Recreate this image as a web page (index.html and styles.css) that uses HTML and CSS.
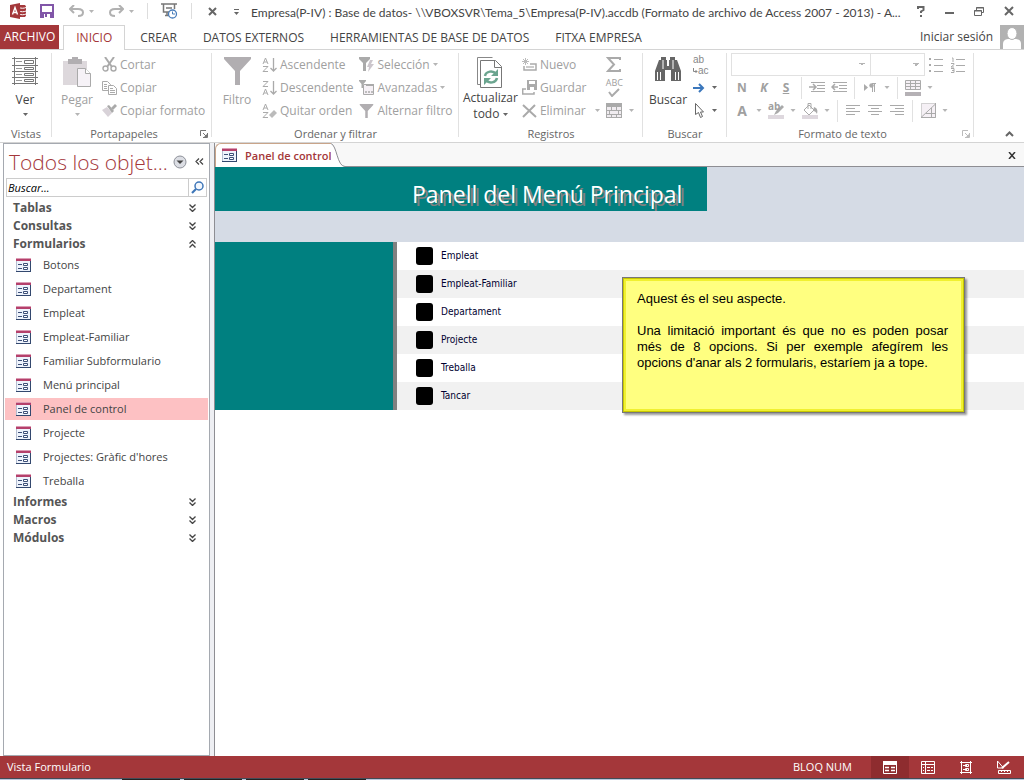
FILE: index.html
```html
<!DOCTYPE html>
<html lang="es">
<head>
    <meta charset="UTF-8">
    <meta name="viewport" content="width=device-width, initial-scale=1.0">
    <title>Empresa(P-IV) : Base de datos</title>
    <link rel="stylesheet" href="styles.css">
</head>
<body>

    <svg class="defs" aria-hidden="true">
        <symbol id="caret" viewBox="0 0 5 3"><path d="M0 0h5L2.500 3z" fill="currentColor"/></symbol>
        <symbol id="form" viewBox="0 0 16 15">
            <path d="M.5.5h14v13H.5z" fill="#eef3fc" stroke="#b4bdd0"/>
            <path d="M0 0h15v3H0z" fill="#b5406b"/><path d="M0 0h15v1H0z" fill="#dc9db5"/>
            <path d="M14.500 3v11M0 13.500h15" stroke="#33486e"/>
            <path d="M2 6.500h4M2 10.500h4" stroke="#3d5078"/>
            <path d="M7.500 5.500h4v2h-4zM7.500 9.500h4v2h-4z" fill="#fff" stroke="#3d5078"/>
        </symbol>
        <symbol id="down" viewBox="0 0 7 8"><path d="M.5.5l3 3 3-3M.5 4.500l3 3 3-3" fill="none" stroke="#444" stroke-width="1.300"/></symbol>
        <symbol id="up" viewBox="0 0 7 8"><path d="M.5 3.500l3-3 3 3M.5 7.500l3-3 3 3" fill="none" stroke="#444" stroke-width="1.300"/></symbol>
        <symbol id="launch" viewBox="0 0 8 8"><path d="M.5 6V.5H6M3 3l3.500 3.500M7.500 3v4.500H3" fill="none" stroke="currentColor"/><path d="M4 7h3V4z" fill="currentColor"/></symbol>
        <symbol id="funnel" viewBox="0 0 27 28"><path d="M0 0h27v2L16 14v14h-5V14L0 2z" fill="currentColor"/></symbol>
    </svg>

    <header class="titlebar">
        <svg class="app-logo" width="16" height="16" viewBox="0 0 16 16"><path d="M9 2h5c1 0 2 .7 2 1.500v9c0 .8-1 1.500-2 1.500H9z" fill="#a4373a"/><path d="M9 4.500c2 1 5 1 7 0M9 8c2 1 5 1 7 0M9 11c2 1 5 1 7 0" stroke="#fff" fill="none"/><path d="M0 2l10-2v16L0 14z" fill="#a4373a"/><path d="M2.500 11.500L5 4.500l2.500 7M3.500 9.500h3" fill="none" stroke="#fff" stroke-width="1.400"/></svg>
        <button class="quick save" aria-label="Guardar"><svg width="14" height="14" viewBox="0 0 14 14"><path d="M1 1h12v12H1z" fill="#fff" stroke="#8156a8" stroke-width="2"/><path d="M1 8h12v5H1z" fill="#8156a8"/><path d="M4 10h6v4H4z" fill="#fff"/><path d="M5 10h2v3H5z" fill="#8156a8"/></svg></button>
        <button class="quick undo" aria-label="Deshacer"><svg width="15" height="12" viewBox="0 0 15 12"><path d="M5 0L1 4l4 4M1 4h8c3 0 5 1 5 3.500S12 11 9 11" fill="none" stroke="#b1b1b1" stroke-width="2"/></svg><svg class="caret"><use href="#caret"/></svg></button>
        <button class="quick redo" aria-label="Rehacer"><svg width="15" height="12" viewBox="0 0 15 12"><path d="M10 0l4 4-4 4M14 4H6C3 4 1 5 1 7.500S3 11 6 11" fill="none" stroke="#b1b1b1" stroke-width="2"/></svg><svg class="caret"><use href="#caret"/></svg></button>
        <span class="bar"></span>
        <button class="quick modes" aria-label="Vista"><svg width="17" height="16" viewBox="0 0 17 16"><path d="M0 1h16M2.500 1v8H8M13.500 1v5M5 5h6M4 12.500h4M6 9v3" fill="none" stroke="#777" stroke-width="1.500"/><circle cx="11.500" cy="11" r="4" fill="#fff" stroke="#4a7ebb" stroke-width="1.300"/><path d="M11.500 8.500V11H14" fill="none" stroke="#4a7ebb"/></svg></button>
        <span class="bar"></span>
        <button class="quick cancel" aria-label="Cerrar objeto"><svg width="9" height="9" viewBox="0 0 9 9"><path d="M1 1l7 7M8 1L1 8" stroke="#666" stroke-width="2"/></svg></button>
        <button class="quick more" aria-label="Personalizar"><svg width="5" height="7" viewBox="0 0 5 7"><path d="M0 .5h5" stroke="#666"/><path d="M0 3h5L2.500 6z" fill="#666"/></svg></button>
        <h1 class="window-title">Empresa(P-IV) : Base de datos- \\VBOXSVR\Tema_5\Empresa(P-IV).accdb (Formato de archivo de Access 2007 - 2013) - A...</h1>
        <div class="window-buttons">
            <button aria-label="Ayuda"><svg width="8" height="11" viewBox="0 0 8 11"><path d="M1 3V1h5.500v3L4 5.500V7" fill="none" stroke="#666" stroke-width="2"/><path d="M3 9h2v2H3z" fill="#666"/></svg></button>
            <button aria-label="Minimizar"><svg width="9" height="11" viewBox="0 0 9 11"><path d="M0 7h9" stroke="#666" stroke-width="2"/></svg></button>
            <button aria-label="Restaurar"><svg width="10" height="9" viewBox="0 0 10 9"><path d="M2.500 3V.5h7v5H8M.5 3.500h7v5h-7zM2 1h8M0 4h8" fill="none" stroke="#666"/></svg></button>
            <button aria-label="Cerrar"><svg width="10" height="10" viewBox="0 0 10 10"><path d="M1 1l8 8M9 1L1 9" stroke="#666" stroke-width="2"/></svg></button>
        </div>
    </header>

    <nav class="tabs">
        <button class="tab file">ARCHIVO</button>
        <button class="tab active">INICIO</button>
        <button class="tab">CREAR</button>
        <button class="tab">DATOS EXTERNOS</button>
        <button class="tab">HERRAMIENTAS DE BASE DE DATOS</button>
        <button class="tab">FITXA EMPRESA</button>
        <a class="signin" href="#">Iniciar sesión <svg width="24" height="24" viewBox="0 0 24 24"><path d="M0 0h24v24H0z" fill="#b2b2b2"/><path d="M3 24v-5c0-4 3-5 6-5h5c4 0 7 1 7 5v5z" fill="#fff"/><ellipse cx="12" cy="8.500" rx="5" ry="6" fill="#fff" stroke="#b2b2b2"/></svg></a>
    </nav>

    <section class="ribbon">
        <div class="group views">
            <div class="tools">
                <button class="big on"><svg width="26" height="28" viewBox="0 0 26 28"><path d="M2.500 0v28M23.500 0v28M0 1.500h26M0 8.500h26M0 14.500h26M0 20.500h26M0 26.500h26" stroke="#777"/><path d="M4 4.500h6M4 11.500h6M4 17.500h6M4 23.500h6" stroke="#999"/><path d="M12.500 3.500h9v3h-9zM12.500 10.500h9v2h-9zM12.500 16.500h9v2h-9zM12.500 22.500h9v2h-9z" fill="#fff" stroke="#777"/></svg><span>Ver</span><svg class="caret"><use href="#caret"/></svg></button>
            </div>
            <div class="caption">Vistas</div>
        </div>
        <div class="group clipboard">
            <div class="tools">
                <button class="big"><svg width="28" height="30" viewBox="0 0 28 30"><path d="M0 4h24v24H0z" fill="#ddd8dc"/><path d="M5 2h4V0h6v2h4v5H5z" fill="#b1aeb1"/><path d="M14.500 11.500h8l5 5v13h-13z" fill="#f6f2f7" stroke="#aaa"/><path d="M22.500 11.500v5h5" fill="#fff" stroke="#aaa"/></svg><span>Pegar</span><svg class="caret"><use href="#caret"/></svg></button>
                <div class="stack">
                    <button><svg width="15" height="15" viewBox="0 0 15 15"><path d="M3 0l7 10M12 0L5 10" stroke="#aaa" stroke-width="2"/><circle cx="3.500" cy="11.500" r="2.500" fill="none" stroke="#aaa" stroke-width="1.400"/><circle cx="11.500" cy="11.500" r="2.500" fill="none" stroke="#aaa" stroke-width="1.400"/></svg>Cortar</button>
                    <button><svg width="15" height="15" viewBox="0 0 15 15"><path d="M.5 1.500h5l3 3v6h-8z" fill="#fff" stroke="#aaa"/><path d="M2 4.500h3M2 6.500h3M2 8.500h3" stroke="#aaa"/><path d="M6.500 5.500h5l3 3v6h-8z" fill="#fff" stroke="#aaa"/><path d="M8 8.500h3M8 10.500h5M8 12.500h5" stroke="#aaa"/></svg>Copiar</button>
                    <button><svg width="15" height="15" viewBox="0 0 15 15"><path d="M0 7l5-3 5 6-4 4z" fill="#d8d2d8"/><path d="M5 3l2-1 5 6-2 2z" fill="#aaa"/><path d="M9 5l4-4 2 2-4 4z" fill="#aaa"/></svg>Copiar formato</button>
                </div>
            </div>
            <div class="caption">Portapapeles</div>
            <button class="launcher" aria-label="Opciones de portapapeles"><svg width="8" height="8"><use href="#launch"/></svg></button>
        </div>
        <div class="group sort">
            <div class="tools">
                <button class="big"><svg class="funnel" width="27" height="28"><use href="#funnel"/></svg><span>Filtro</span></button>
                <div class="stack">
                    <button><svg width="15" height="16" viewBox="0 0 15 16"><path d="M1 7l2.500-6L6 7M2 5h3M1 9.500h5l-5 5h5" fill="none" stroke="#aaa"/><path d="M11.500 1v13M8.500 11l3 3 3-3" fill="none" stroke="#aaa" stroke-width="1.300"/></svg>Ascendente</button>
                    <button><svg width="15" height="16" viewBox="0 0 15 16"><path d="M1 1.500h5l-5 5h5M1 15l2.500-6L6 15M2 13h3" fill="none" stroke="#aaa"/><path d="M11.500 1v13M8.500 11l3 3 3-3" fill="none" stroke="#aaa" stroke-width="1.300"/></svg>Descendente</button>
                    <button><svg width="15" height="16" viewBox="0 0 15 16"><path d="M1 7l2.500-6L6 7M2 5h3M1 9.500h5l-5 5h5" fill="none" stroke="#aaa"/><path d="M7 12l5-5 3 3-5 5z" fill="#bbb"/></svg>Quitar orden</button>
                </div>
                <div class="stack">
                    <button><svg width="15" height="15" viewBox="0 0 15 15"><path d="M0 0h11v2L7 6v8H4V6L0 2z" fill="#aaa"/><path d="M11 3l3 0-2 4h3l-6 8 1-5H8z" fill="#ccc6cc"/></svg>Selección<svg class="caret"><use href="#caret"/></svg></button>
                    <button><svg width="15" height="15" viewBox="0 0 15 15"><path d="M0 0h7v1L4.500 4v4h-2V4L0 1z" fill="#aaa"/><path d="M4.500 4.500h10v10h-10z" fill="#f5f0f5" stroke="#aaa"/><path d="M7 5h8" stroke="#aaa" stroke-width="2"/><path d="M6 12h8" stroke="#aaa" stroke-width="1.500" stroke-dasharray="2 1"/></svg>Avanzadas<svg class="caret"><use href="#caret"/></svg></button>
                    <button><svg class="funnel" width="15" height="14"><use href="#funnel"/></svg>Alternar filtro</button>
                </div>
            </div>
            <div class="caption">Ordenar y filtrar</div>
        </div>
        <div class="group records">
            <div class="tools">
                <button class="big on"><svg width="26" height="31" viewBox="0 0 26 31"><path d="M4 27.500H.5V.5h15" fill="none" stroke="#888"/><path d="M3.500 3.500h15l6 6v21h-21z" fill="#fff" stroke="#777"/><path d="M17.500 3.500v7h7" fill="none" stroke="#777"/><path d="M8 19c1-5 8-6 11-2M20 21c-1 5-8 6-11 2" fill="none" stroke="#6ba58f" stroke-width="2.500"/><path d="M21 12v7h-7zM7 28v-7h7z" fill="#6ba58f"/></svg><span>Actualizar</span><span>todo <svg class="caret"><use href="#caret"/></svg></span></button>
                <div class="stack">
                    <button><svg width="15" height="14" viewBox="0 0 15 14"><path d="M3.500 0v7M0 3.500h7M1 1l5 5M6 1L1 6" stroke="#bbb"/><path d="M2 8v4h12V6H8" fill="none" stroke="#aaa" stroke-width="1.500"/><path d="M4 9h8" stroke="#ccc" stroke-width="2"/></svg>Nuevo</button>
                    <button><svg width="15" height="15" viewBox="0 0 15 15"><path d="M5 0h10v10H5z" fill="#aaa"/><path d="M7 1h6v3H7zM8 7h4v3H8z" fill="#fff"/><path d="M4 9H.700v5H12v-2" fill="none" stroke="#aaa" stroke-width="1.500"/></svg>Guardar</button>
                    <button><svg width="15" height="14" viewBox="0 0 15 14"><path d="M1 1l13 12M13 1L1 13" stroke="#aaa" stroke-width="2"/></svg>Eliminar<svg class="caret far"><use href="#caret"/></svg></button>
                </div>
                <div class="stack narrow">
                    <button aria-label="Totales"><svg width="16" height="15" viewBox="0 0 16 15"><path d="M14 3V1H2l6 6.500L2 14h12v-2" fill="none" stroke="#aaa" stroke-width="2"/></svg></button>
                    <button class="spell" aria-label="Revisión ortográfica"><span>ABC</span><svg width="12" height="9" viewBox="0 0 12 9"><path d="M1 4l3 4 7-7" fill="none" stroke="#aaa" stroke-width="2"/></svg></button>
                    <button aria-label="Más"><svg width="16" height="15" viewBox="0 0 16 15"><path d="M0 0h16v15H0z" fill="#aaa"/><path d="M1 4h4v3H1zM6 4h4v3H6zM11 4h4v3h-4zM1 8h2v3H1zM4 8h8v3H4zM13 8h2v3h-2zM1 12h4v2H1zM6 12h4v2H6zM11 12h4v2h-4z" fill="#f0ecf0"/></svg><svg class="caret"><use href="#caret"/></svg></button>
                </div>
            </div>
            <div class="caption">Registros</div>
        </div>
        <div class="group find">
            <div class="tools">
                <button class="big on"><svg width="26" height="24" viewBox="0 0 26 24"><path d="M6 0h5v3h1v6h2V3h1V0h5v3h2l4 11v10H16V13h-6v11H0V14L4 3h2z" fill="#666"/><path d="M2.500 15v8M5.500 15v8M20.500 15v8M23.500 15v8M8 3v9M18 3v9" stroke="#fff"/><path d="M12 5h2v3h-2z" fill="#fff"/></svg><span>Buscar</span></button>
                <div class="stack narrow">
                    <button class="replace" aria-label="Reemplazar"><span>ab</span><span><svg width="5" height="6" viewBox="0 0 5 6"><path d="M.5 0v3.500H4M2.500 2L4 3.500 2.500 5" fill="none" stroke="#888"/></svg>ac</span></button>
                    <button class="on" aria-label="Ir a"><svg width="12" height="10" viewBox="0 0 12 10"><path d="M0 5h10M6 1l4 4-4 4" fill="none" stroke="#3b77bc" stroke-width="2"/></svg><svg class="caret"><use href="#caret"/></svg></button>
                    <button class="on" aria-label="Seleccionar"><svg width="12" height="15" viewBox="0 0 12 15"><path d="M2.500.5v11l3-2 2 5 2-1-2-4.500h3z" fill="#fff" stroke="#666"/></svg><svg class="caret"><use href="#caret"/></svg></button>
                </div>
            </div>
            <div class="caption">Buscar</div>
        </div>
        <div class="group format">
            <div class="format-rows">
                <div class="format-row">
                    <select class="font-name" aria-label="Fuente"><option></option></select>
                    <select class="font-size" aria-label="Tamaño de fuente"><option></option></select>
                    <button aria-label="Viñetas"><svg width="14" height="15" viewBox="0 0 14 15"><path d="M0 1h2v2H0zM0 7h2v2H0zM0 13h2v2H0z" fill="#aaa"/><path d="M5 2.500h9M5 8.500h9M5 14.500h9" stroke="#aaa"/></svg></button>
                    <button aria-label="Numeración"><svg width="14" height="16" viewBox="0 0 14 16"><path d="M1 1h1v4M0 6.500h3v1L0 10h3M0 11.500h3v4H0M1 13.500h2" fill="none" stroke="#aaa"/><path d="M5 2.500h9M5 8.500h9M5 14.500h9" stroke="#aaa"/></svg></button>
                </div>
                <div class="format-row">
                    <button class="letter">N</button>
                    <button class="letter italic">K</button>
                    <button class="letter under">S</button>
                    <span class="sep"></span>
                    <button aria-label="Aumentar sangría"><svg width="16" height="11" viewBox="0 0 16 11"><path d="M2 .5h14M8 3.500h8M8 6.500h8M2 9.500h14" stroke="#aaa"/><path d="M0 5h6M4 2l3 3-3 3" fill="none" stroke="#aaa" stroke-width="1.500"/></svg></button>
                    <button aria-label="Disminuir sangría"><svg width="16" height="11" viewBox="0 0 16 11"><path d="M2 .5h14M8 3.500h8M8 6.500h8M2 9.500h14" stroke="#aaa"/><path d="M1 5h6M4 2L1 5l3 3" fill="none" stroke="#aaa" stroke-width="1.500"/></svg></button>
                    <span class="sep"></span>
                    <button aria-label="Dirección"><svg width="12" height="10" viewBox="0 0 12 10"><path d="M0 1l4 3.500L0 8z" fill="#aaa"/><path d="M12 .5H8M8.500 0v9M10.500 0v9" stroke="#aaa"/><circle cx="7.500" cy="2.500" r="2.200" fill="#aaa"/></svg></button>
                    <svg class="caret"><use href="#caret"/></svg>
                    <span class="sep"></span>
                    <button aria-label="Líneas de cuadrícula"><svg width="16" height="16" viewBox="0 0 16 16"><path d="M.5.5h15v9H.5zM5.500 0v10M10.500 0v10M0 3.500h16M0 6.500h16" fill="#f5f0f5" stroke="#aaa"/><path d="M0 12h16v4H0z" fill="#b5b1b5"/></svg></button>
                    <svg class="caret"><use href="#caret"/></svg>
                </div>
                <div class="format-row">
                    <button class="letter large">A</button>
                    <svg class="caret"><use href="#caret"/></svg>
                    <button class="marker" aria-label="Resaltado"><span>ab</span><svg width="16" height="16" viewBox="0 0 16 16"><path d="M0 12h16v4H0z" fill="#ded8de"/><path d="M14 2L8 8l-2 4 4-2 6-6z" fill="#aaa"/></svg></button>
                    <svg class="caret"><use href="#caret"/></svg>
                    <button aria-label="Color de fondo"><svg width="16" height="16" viewBox="0 0 16 16"><path d="M0 12h16v4H0z" fill="#ded8de"/><path d="M7 2l5 5-5 5-5-5zM6 6V.5h3V6" fill="#fff" stroke="#aaa"/><path d="M12 4c3 1 4 3 3 7-1-2-2-3-4-3z" fill="#aaa"/></svg></button>
                    <svg class="caret"><use href="#caret"/></svg>
                    <span class="sep"></span>
                    <button aria-label="Alinear a la izquierda"><svg width="14" height="11" viewBox="0 0 14 11"><path d="M0 .5h14M0 3.500h9M0 6.500h14M0 9.500h9" stroke="#aaa"/></svg></button>
                    <button aria-label="Centrar"><svg width="14" height="11" viewBox="0 0 14 11"><path d="M0 .5h14M3 3.500h8M0 6.500h14M3 9.500h8" stroke="#aaa"/></svg></button>
                    <button aria-label="Alinear a la derecha"><svg width="14" height="11" viewBox="0 0 14 11"><path d="M0 .5h14M5 3.500h9M0 6.500h14M5 9.500h9" stroke="#aaa"/></svg></button>
                    <span class="sep"></span>
                    <button aria-label="Color de fila alternativo"><svg width="15" height="15" viewBox="0 0 15 15"><path d="M.5.5h14v14H.5z" fill="#f5f0f5" stroke="#aaa" stroke-dasharray="1 1"/><path d="M14.500 0v14.500H0L14.500 1M10.500 5v10M5 10.500h10" fill="none" stroke="#aaa"/></svg></button>
                    <svg class="caret"><use href="#caret"/></svg>
                </div>
            </div>
            <div class="caption">Formato de texto</div>
            <button class="launcher dim" aria-label="Opciones de formato"><svg width="8" height="8"><use href="#launch"/></svg></button>
        </div>
        <button class="collapse" aria-label="Contraer la cinta"><svg width="9" height="6" viewBox="0 0 9 6"><path d="M1 5l3.500-3.500L8 5" fill="none" stroke="#666" stroke-width="2"/></svg></button>
    </section>

    <div class="workspace">
        <aside class="pane">
            <div class="pane-head">
                <h2>Todos los objet...</h2>
                <button aria-label="Menú del panel"><svg width="14" height="14" viewBox="0 0 14 14"><circle cx="7" cy="7" r="6" fill="#dcdee4" stroke="#8d9099"/><path d="M3.500 5.500h7L7 9z" fill="#444"/></svg></button>
                <button aria-label="Ocultar panel"><svg width="9" height="7" viewBox="0 0 9 7"><path d="M4 .5l-3 3 3 3M8 .5l-3 3 3 3" fill="none" stroke="#444" stroke-width="1.200"/></svg></button>
            </div>
            <div class="search">
                <input type="text" placeholder="Buscar..." aria-label="Buscar">
                <button aria-label="Buscar"><svg width="13" height="13" viewBox="0 0 13 13"><circle cx="8" cy="5" r="4" fill="#f2f7fd" stroke="#3e76b8" stroke-width="1.500"/><path d="M5 8l-4 4" stroke="#3e76b8" stroke-width="2.200"/></svg></button>
            </div>
            <button class="section">Tablas<svg><use href="#down"/></svg></button>
            <button class="section">Consultas<svg><use href="#down"/></svg></button>
            <button class="section">Formularios<svg><use href="#up"/></svg></button>
            <ul class="objects">
                <li><a href="#"><svg><use href="#form"/></svg>Botons</a></li>
                <li><a href="#"><svg><use href="#form"/></svg>Departament</a></li>
                <li><a href="#"><svg><use href="#form"/></svg>Empleat</a></li>
                <li><a href="#"><svg><use href="#form"/></svg>Empleat-Familiar</a></li>
                <li><a href="#"><svg><use href="#form"/></svg>Familiar Subformulario</a></li>
                <li><a href="#"><svg><use href="#form"/></svg>Menú principal</a></li>
                <li><a href="#" class="selected"><svg><use href="#form"/></svg>Panel de control</a></li>
                <li><a href="#"><svg><use href="#form"/></svg>Projecte</a></li>
                <li><a href="#"><svg><use href="#form"/></svg>Projectes: Gràfic d'hores</a></li>
                <li><a href="#"><svg><use href="#form"/></svg>Treballa</a></li>
            </ul>
            <button class="section">Informes<svg><use href="#down"/></svg></button>
            <button class="section">Macros<svg><use href="#down"/></svg></button>
            <button class="section">Módulos<svg><use href="#down"/></svg></button>
        </aside>

        <main class="document">
            <div class="doc-tabs">
                <button class="doc-tab"><svg class="doc-icon"><use href="#form"/></svg>Panel de control</button>
                <svg class="doc-curve" width="14" height="24" viewBox="0 0 14 24"><path d="M0 .5c6 2 6 23 14 23V24H0z" fill="#fff"/><path d="M0 .5c6 2 6 23 14 23" fill="none" stroke="#8e8e93"/></svg>
                <button class="doc-close" aria-label="Cerrar formulario"><svg width="8" height="7" viewBox="0 0 8 7"><path d="M1 0l6 7M7 0L1 7" stroke="#333" stroke-width="1.500"/></svg></button>
            </div>
            <div class="form-head">
                <h2>Panell del Menú Principal</h2>
            </div>
            <div class="form-body">
                <div class="form-side"></div>
                <ul class="options">
                    <li><button><i></i>Empleat</button></li>
                    <li><button><i></i>Empleat-Familiar</button></li>
                    <li><button><i></i>Departament</button></li>
                    <li><button><i></i>Projecte</button></li>
                    <li><button><i></i>Treballa</button></li>
                    <li><button><i></i>Tancar</button></li>
                </ul>
                <div class="note">
                    <p>Aquest és el seu aspecte.</p>
                    <p>Una limitació important és que no es poden posar més&nbsp;de 8 opcions. Si per exemple afegírem les opcions d'anar als 2 formularis, estaríem ja a tope.</p>
                </div>
            </div>
        </main>
    </div>

    <footer class="statusbar">
        <span>Vista Formulario</span>
        <span class="lock">BLOQ NUM</span>
        <button class="active" aria-label="Vista Formulario"><svg width="14" height="13" viewBox="0 0 14 13"><path d="M.5.5h13v12H.5z" fill="none" stroke="#fff"/><path d="M0 0h14v4H0z" fill="#fff"/><path d="M2 6.500h4M2 9.500h4M8 6.500h4M8 9.500h4" stroke="#fff" stroke-width="1.500"/></svg></button>
        <button aria-label="Vista Hoja de datos"><svg width="14" height="13" viewBox="0 0 14 13"><path d="M.5.5h13v12H.5zM0 3.500h14M4.500 0v13M6 6.500h3M10 6.500h2M6 9.500h3M10 9.500h2M2 6.500h1M2 9.500h1" fill="none" stroke="#fff"/></svg></button>
        <button aria-label="Vista Presentación"><svg width="12" height="13" viewBox="0 0 12 13"><path d="M1.500 0v13M10.500 0v13M0 1.500h12M0 11.500h12M3 4.500h4M3 8.500h4" fill="none" stroke="#fff"/><path d="M5.500 3.500h3v2h-3zM5.500 7.500h3v2h-3z" fill="none" stroke="#fff"/></svg></button>
        <button aria-label="Vista Diseño"><svg width="14" height="13" viewBox="0 0 14 13"><path d="M.5 0v7h6zM1.500 9.500h12v3h-12zM4.500 10v1M7.500 10v1M10.500 10v1" fill="none" stroke="#fff"/><path d="M5 7l7-6" stroke="#fff" stroke-width="2"/></svg></button>
    </footer>
    <div class="taskbar-edge"><i></i><i></i><i></i><i></i></div>

</body>
</html>
```
FILE: styles.css
```css
* {
    box-sizing: border-box;
}

body {
    margin: 0;
    height: 100vh;
    display: flex;
    flex-direction: column;
    background: #fff;
    color: #444;
    font: 12px/16px "Open Sans", "Noto Sans", sans-serif;
    overflow: hidden;
}

button, input, select {
    font: inherit;
    color: inherit;
    background: none;
    border: 0;
    padding: 0;
    margin: 0;
}

button {
    display: inline-flex;
    align-items: center;
    white-space: nowrap;
}

a {
    color: inherit;
    text-decoration: none;
}

h1, h2, ul, p {
    margin: 0;
    padding: 0;
    font-weight: normal;
}

ul {
    list-style: none;
}

svg {
    flex: none;
}

.defs {
    position: absolute;
    width: 0;
    height: 0;
}

.caret {
    width: 5px;
    height: 3px;
    color: #b5b5b5;
}

.on .caret {
    color: #666;
}

/* title bar */

.titlebar {
    display: flex;
    align-items: center;
    height: 25px;
    padding: 0 10px 3px 10px;
    flex: none;
}

.quick {
    gap: 5px;
}

.save {
    margin-left: 14px;
}

.undo, .redo {
    margin-left: 15px;
}

.bar {
    width: 1px;
    height: 16px;
    margin: 0 13px;
    background: #ddd;
}

.cancel {
    margin-left: 3px;
}

.more {
    margin: 3px 12px 0 17px;
}

.window-title {
    font: 12px/16px Lato, "Open Sans", sans-serif;
    padding-top: 4px;
    white-space: nowrap;
}

.window-buttons {
    display: flex;
    align-items: center;
    gap: 20px;
    margin-left: auto;
}

/* ribbon tabs */

.tabs {
    display: flex;
    height: 25px;
    flex: none;
    border-bottom: 1px solid #d4d4d4;
}

.tab {
    padding: 1px 13px 0;
}

.tab.file {
    background: #a4373a;
    color: #fff;
    padding: 0 4px;
    margin-right: 4px;
}

.tab.active {
    height: 25px;
    border: 1px solid #d4d4d4;
    border-bottom: 0;
    background: #fff;
    color: #a4373a;
    padding: 0 12px;
    margin-right: 2px;
}

.signin {
    display: flex;
    align-items: center;
    gap: 7px;
    margin-left: auto;
}

/* ribbon */

.ribbon {
    display: flex;
    flex: none;
    height: 93px;
    padding: 3px 0 1px;
    border-bottom: 1px solid #d4d4d4;
    position: relative;
}

.group {
    display: flex;
    flex-direction: column;
    justify-content: space-between;
    flex: none;
    background: linear-gradient(#e1e1e1, #e1e1e1) no-repeat right top / 1px 84px;
    position: relative;
}

.views { width: 52px; }
.clipboard { width: 160px; }
.sort { width: 247px; }
.records { width: 184px; }
.find { width: 84px; }
.format { width: 247px; }

.caption {
    font-size: 11px;
    line-height: 14px;
    text-align: center;
    color: #666;
}

.clipboard .caption, .format .caption {
    padding-right: 16px;
}

.tools {
    display: flex;
    color: #a0a0a0;
}

.tools .on {
    color: #444;
}

.big {
    flex-direction: column;
    height: 69px;
    padding-top: 4px;
    margin: 0 4px;
    min-width: 42px;
}

.big > svg:first-child {
    margin-bottom: auto;
}

.big > .caret {
    margin: 5px 0 6px;
}

.sort .big, .find .big {
    padding-bottom: 14px;
}

.big .caret {
    vertical-align: middle;
}

.stack {
    display: flex;
    flex-direction: column;
    align-items: flex-start;
}

.stack button {
    height: 23px;
    gap: 3px;
}

.stack + .stack {
    margin-left: 6px;
}

.funnel {
    color: #b1aeb1;
}

.far {
    margin-left: 6px;
}

.spell, .replace {
    flex-direction: column;
    justify-content: center;
}

.stack .spell, .stack .replace {
    gap: 0;
    font-size: 9px;
    line-height: 10px;
}

.stack .replace {
    align-items: flex-start;
    font: 10px/11px "Liberation Sans", Arial, sans-serif;
    color: #888;
}

.stack.narrow button:not(.spell, .replace) {
    gap: 7px;
}

.launcher {
    position: absolute;
    right: 4px;
    bottom: 3px;
    color: #777;
}

.launcher.dim {
    color: #bbb;
}

.collapse {
    position: absolute;
    right: 10px;
    bottom: 5px;
}

/* text format group */

.format-rows {
    padding-left: 4px;
    color: #a0a0a0;
}

.format-row {
    display: flex;
    align-items: center;
    height: 23px;
}

.format-row button {
    width: 22px;
    height: 22px;
    justify-content: center;
}

.format-row > .caret {
    width: 12px;
}

.font-name, .font-size {
    appearance: none;
    height: 23px;
    border: 1px solid #e1e1e1;
    background:
        linear-gradient(45deg, transparent 50%, #b5b5b5 50%) no-repeat right 8px center / 3px 3px,
        linear-gradient(-45deg, transparent 50%, #b5b5b5 50%) no-repeat right 5px center / 3px 3px;
}

.font-name {
    width: 140px;
}

.font-size {
    width: 55px;
    margin-left: -1px;
}

.letter {
    font-weight: bold;
}

.italic {
    font-style: italic;
}

.under {
    text-decoration: underline;
}

.format-row .large {
    font-size: 14px;
}

.sep {
    width: 1px;
    height: 22px;
    margin: 0 4px;
    background: #e1e1e1;
}

.marker {
    position: relative;
}

.marker span {
    position: absolute;
    left: 3px;
    top: 0;
    font-size: 10px;
    font-weight: bold;
    line-height: 12px;
}

/* navigation pane */

.workspace {
    display: flex;
    flex: 1;
    min-height: 0;
}

.pane {
    flex: none;
    width: 207px;
    margin-left: 3px;
    border: 1px solid #a5a9b0;
    padding: 1px;
}

.pane-head {
    display: flex;
    align-items: center;
    gap: 8px;
    height: 33px;
    padding: 0 4px;
}

.pane-head h2 {
    flex: 1;
    min-width: 0;
    color: #a4373a;
    font: 300 21px/32px "Open Sans", "Noto Sans", sans-serif;
    white-space: nowrap;
}

.search {
    display: flex;
    height: 19px;
    margin: 0 1px 2px;
    border: 1px solid #ccc;
}

.search input {
    flex: 1;
    min-width: 0;
    padding: 0 1px;
    font-size: 11px;
    font-style: italic;
    color: #000;
}

.search input::placeholder {
    color: #000;
}

.search button {
    width: 18px;
    justify-content: center;
    border-left: 1px solid #ccc;
}

.section {
    display: flex;
    justify-content: space-between;
    width: 100%;
    height: 18px;
    padding: 0 12px 0 8px;
    font-weight: bold;
    font-size: 12px;
    color: #555;
}

.section svg {
    width: 7px;
    height: 8px;
}

.objects li {
    padding: 1px 0;
    height: 24px;
}

.objects a {
    display: flex;
    align-items: center;
    gap: 11px;
    height: 22px;
    padding-left: 11px;
    font-size: 11px;
}

.objects svg, .doc-icon {
    width: 16px;
    height: 15px;
}

.objects .selected {
    background: #fdc1c3;
}

/* document */

.document {
    flex: 1;
    min-width: 0;
    border-left: 1px solid #8e8e93;
    margin-left: 4px;
    box-shadow: -4px 0 #eeeff3;
}

.doc-tabs {
    display: flex;
    height: 24px;
    background: #f8f8f8;
    box-shadow: inset 0 -1px #8e8e93;
}

.doc-tab {
    height: 24px;
    padding: 0 0 0 6px;
    gap: 7px;
    background: #fff;
    border: 1px solid #c9a58a;
    border-width: 1px 0 0 1px;
    border-radius: 6px 0 0 0;
    font-size: 11px;
    font-weight: 600;
    color: #a4373a;
}

.doc-close {
    margin: 0 8px 0 auto;
}

.form-head {
    height: 75px;
    background: #d5dbe5;
}

.form-head h2 {
    width: 492px;
    height: 44px;
    padding: 11px 0 0 197px;
    background: #008080;
    color: #fff;
    font-size: 23px;
    line-height: 32px;
    text-shadow: 3px 3px #808080;
    white-space: nowrap;
    overflow: hidden;
}

.form-body {
    display: flex;
    position: relative;
}

.form-side {
    width: 182px;
    background: #008080;
    border-right: 4px solid #808080;
}

.options {
    flex: 1;
}

.options li {
    height: 28px;
    padding-left: 19px;
}

.options li:nth-child(even) {
    background: #f1f1f1;
}

.options button {
    gap: 8px;
    height: 27px;
    color: #000030;
    font: 10px/16px "DejaVu Sans Condensed", "DejaVu Sans", sans-serif;
}

.options i {
    width: 17px;
    height: 18px;
    border-radius: 3px;
    background: #000;
}

.note {
    position: absolute;
    left: 407px;
    top: 35px;
    width: 343px;
    height: 136px;
    padding: 12px 15px 12px 13px;
    background: #ffff80;
    border: 2px solid #c8c800;
    outline: 1px solid #777;
    outline-offset: -1px;
    box-shadow: 2px 2px 2px rgba(0, 0, 0, 0.4), inset 0 0 0 2px #f0f030;
    color: #000;
    font: 13px/16px "Liberation Sans", Arial, sans-serif;
    text-align: justify;
}

.note p + p {
    margin-top: 16px;
}

/* status bar */

.statusbar {
    display: flex;
    align-items: center;
    flex: none;
    height: 22px;
    padding: 0 1px 0 7px;
    background: #a4373a;
    color: #fff;
    font-size: 11px;
}

.lock {
    margin: 0 19px 0 auto;
}

.statusbar button {
    width: 38px;
    height: 22px;
    justify-content: center;
}

.statusbar .active {
    background: #8e2c2f;
}

.taskbar-edge {
    display: flex;
    gap: 4px;
    flex: none;
    height: 2px;
    padding-left: 122px;
    background: #b9c6dc;
    border-top: 1px solid #444a55;
}

.taskbar-edge i {
    width: 58px;
    background: #222;
}
```
